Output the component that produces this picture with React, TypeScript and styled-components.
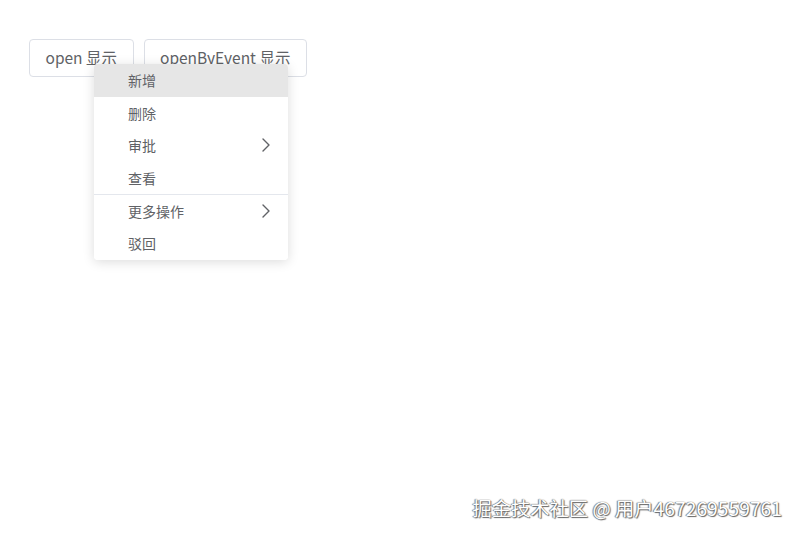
import styled, { createGlobalStyle } from "styled-components";

const GlobalStyle = createGlobalStyle`
  html, body {
    margin: 0;
    padding: 0;
    background: #ffffff;
  }
  body {
    font-family: "Noto Sans CJK SC", "Noto Sans", sans-serif;
  }
`;

const Page = styled.div`
  position: relative;
  width: 800px;
  height: 538px;
  overflow: hidden;
  padding: 39px 0 0 29px;
  box-sizing: border-box;
`;

const Toolbar = styled.div`
  display: flex;
  gap: 10px;
`;

const Button = styled.button`
  height: 38px;
  padding: 0 15.5px;
  border: 1px solid #dcdfe6;
  border-radius: 4px;
  background: #ffffff;
  color: #606266;
  font-family: "Noto Sans CJK SC", "Noto Sans", sans-serif;
  font-size: 15.5px;
  line-height: 1;
  cursor: pointer;
`;

const Menu = styled.ul`
  position: absolute;
  left: 94px;
  top: 64px;
  width: 194px;
  margin: 0;
  padding: 0;
  list-style: none;
  background: #ffffff;
  border-radius: 4px;
  box-shadow: 0 2px 12px rgba(0, 0, 0, 0.14);
  overflow: hidden;
`;

const Item = styled.li<{ $active?: boolean; $divided?: boolean }>`
  display: flex;
  align-items: center;
  justify-content: space-between;
  height: ${(p) => (p.$divided ? 32 : 32.5)}px;
  padding: 0 18px 0 34px;
  font-size: 14px;
  color: #606266;
  background: ${(p) => (p.$active ? "#e6e6e6" : "#ffffff")};
  border-top: ${(p) => (p.$divided ? "1px solid #e4e7ed" : "none")};
  box-sizing: content-box;
`;

const Chevron = () => (
  <svg width="8" height="14" viewBox="0 0 8 14" fill="none">
    <path d="M1 1l6 6-6 6" stroke="#606266" strokeWidth="1.4" strokeLinecap="round" strokeLinejoin="round" />
  </svg>
);

const Watermark = styled.div`
  position: absolute;
  right: 18px;
  bottom: 16px;
  font-family: "Noto Sans CJK SC", "Noto Sans", sans-serif;
  font-size: 19.3px;
  color: #ffffff;
  text-shadow: 0 0 1px #555, 1px 1px 1px #666, -1px 0 1px #888;
`;

const items = [
  { label: "新增", active: true },
  { label: "删除" },
  { label: "审批", sub: true },
  { label: "查看" },
  { label: "更多操作", sub: true, divided: true },
  { label: "驳回" },
];

export default function App() {
  return (
    <Page>
      <GlobalStyle />
      <Toolbar>
        <Button>open 显示</Button>
        <Button>openByEvent 显示</Button>
      </Toolbar>
      <Menu>
        {items.map((it) => (
          <Item key={it.label} $active={it.active} $divided={it.divided}>
            <span>{it.label}</span>
            {it.sub && <Chevron />}
          </Item>
        ))}
      </Menu>
      <Watermark>掘金技术社区 @ 用户467269559761</Watermark>
    </Page>
  );
}
